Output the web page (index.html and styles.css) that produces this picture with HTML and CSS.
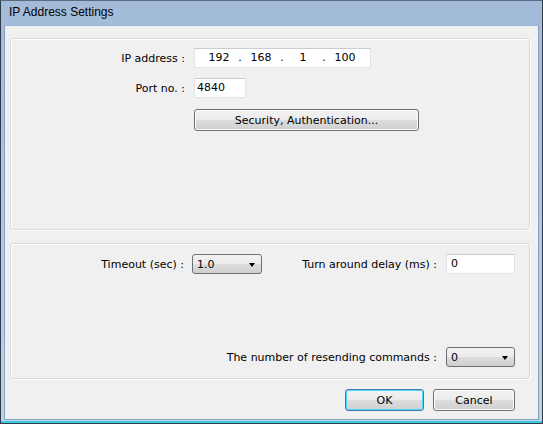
FILE: index.html
```html
<!DOCTYPE html>
<html lang="en">

<head>
    <meta charset="UTF-8">
    <title>IP Address Settings</title>
    <link rel="stylesheet" href="styles.css">
</head>

<body>
    <div class="window">
        <div class="titlebar">IP Address Settings</div>

        <div class="client">
            <div class="group group-top">
                <div class="row">
                    <span class="label">IP address :</span>
                    <div class="ip-box">
                        <span class="oct">192</span><span class="dot">.</span>
                        <span class="oct">168</span><span class="dot">.</span>
                        <span class="oct">1</span><span class="dot">.</span>
                        <span class="oct">100</span>
                    </div>
                </div>
                <div class="row">
                    <span class="label">Port no. :</span>
                    <div class="text-box port">4840</div>
                </div>
                <div class="row">
                    <span class="label"></span>
                    <button class="btn security">Security, Authentication...</button>
                </div>
            </div>

            <div class="group group-bottom">
                <div class="row row-timeout">
                    <span class="label label-timeout">Timeout (sec) :</span>
                    <div class="combo timeout">1.0<span class="arrow"></span></div>
                    <span class="label-delay">Turn around delay (ms) :</span>
                    <div class="text-box delay">0</div>
                </div>
                <div class="row row-resend">
                    <span class="label-resend">The number of resending commands :</span>
                    <div class="combo resend">0<span class="arrow"></span></div>
                </div>
            </div>

            <div class="actions">
                <button class="btn ok">OK</button>
                <button class="btn cancel">Cancel</button>
            </div>
        </div>
    </div>
</body>

</html>
```

FILE: styles.css
```css
* {
    box-sizing: border-box;
    font-family: "DejaVu Sans", sans-serif;
    font-size: 11px;
    color: #000;
}

body {
    margin: 0;
    background: #f0f0f0;
}

.window {
    width: 543px;
    height: 424px;
    border: 1px solid #2e3b48;
    border-top-color: #5a6c80;
    background: linear-gradient(#a2bbd8, #bcd3ec);
    display: flex;
    flex-direction: column;
    padding: 0 3px 3px 3px;
    box-shadow: inset 0 -2px 0 #3cc8e0;
}

.titlebar {
    height: 24px;
    padding: 4px 0 0 5px;
    font-family: "Liberation Sans", sans-serif;
    font-size: 12px;
    color: #000;
}

.client {
    flex: 1;
    background: #f0f0f0;
    border: 1px solid #8aa2c0;
    border-top-color: #9db4d0;
    padding: 12px 8px 0 5px;
    display: flex;
    flex-direction: column;
}

.group {
    border: 1px solid #dcdcdc;
    border-radius: 3px;
    box-shadow: 1px 1px 0 #fff inset, 1px 1px 0 #fff;
}

.group-top {
    height: 192px;
    padding-top: 9px;
}

.group-bottom {
    height: 136px;
    margin-top: 13px;
    padding-top: 10px;
}

.row {
    display: flex;
    align-items: center;
    margin-bottom: 10px;
}

.label {
    width: 174px;
    text-align: right;
    flex-shrink: 0;
}

.group-top .label {
    margin-right: 9px;
}

.text-box,
.ip-box {
    background: #fff;
    border: 1px solid #e2e3e6;
    border-top-color: #c9ccd2;
    height: 20px;
    line-height: 18px;
    padding-left: 2px;
}

.ip-box {
    width: 177px;
    display: flex;
    padding-left: 9px;
}

.oct {
    width: 30px;
    text-align: center;
}

.dot {
    width: 12px;
    text-align: center;
}

.port {
    width: 52px;
}

.btn {
    height: 22px;
    border: 1px solid #707070;
    border-radius: 3px;
    background: linear-gradient(#f2f2f2 0%, #ebebeb 50%, #dddddd 51%, #cfcfcf 100%);
    box-shadow: inset 0 0 0 1px #fcfcfc;
    padding: 0;
}

.security {
    width: 225px;
    margin-top: 1px;
}

.label-timeout {
    width: 173px;
    margin-right: 8px;
}

.combo {
    position: relative;
    height: 20px;
    border: 1px solid #707070;
    border-radius: 3px;
    background: linear-gradient(#f2f2f2 0%, #ebebeb 50%, #dddddd 51%, #cfcfcf 100%);
    line-height: 20px;
    padding-left: 4px;
}

.arrow {
    position: absolute;
    right: 6px;
    top: 8px;
    border-left: 3.5px solid transparent;
    border-right: 3.5px solid transparent;
    border-top: 4px solid #000;
}

.timeout {
    width: 70px;
}

.label-delay {
    width: 175px;
    text-align: right;
    margin-right: 9px;
}

.delay {
    width: 69px;
    padding-left: 4px;
}

.row-resend {
    margin-top: 73px;
}

.label-resend {
    width: 426px;
    text-align: right;
    margin-right: 9px;
}

.resend {
    width: 69px;
}

.actions {
    display: flex;
    justify-content: flex-end;
    gap: 9px;
    padding-top: 10px;
    padding-right: 15px;
}

.ok {
    width: 79px;
    border-color: #3c7fb1;
    box-shadow: inset 0 0 0 1px #48d8fb;
}

.cancel {
    width: 82px;
}
```
